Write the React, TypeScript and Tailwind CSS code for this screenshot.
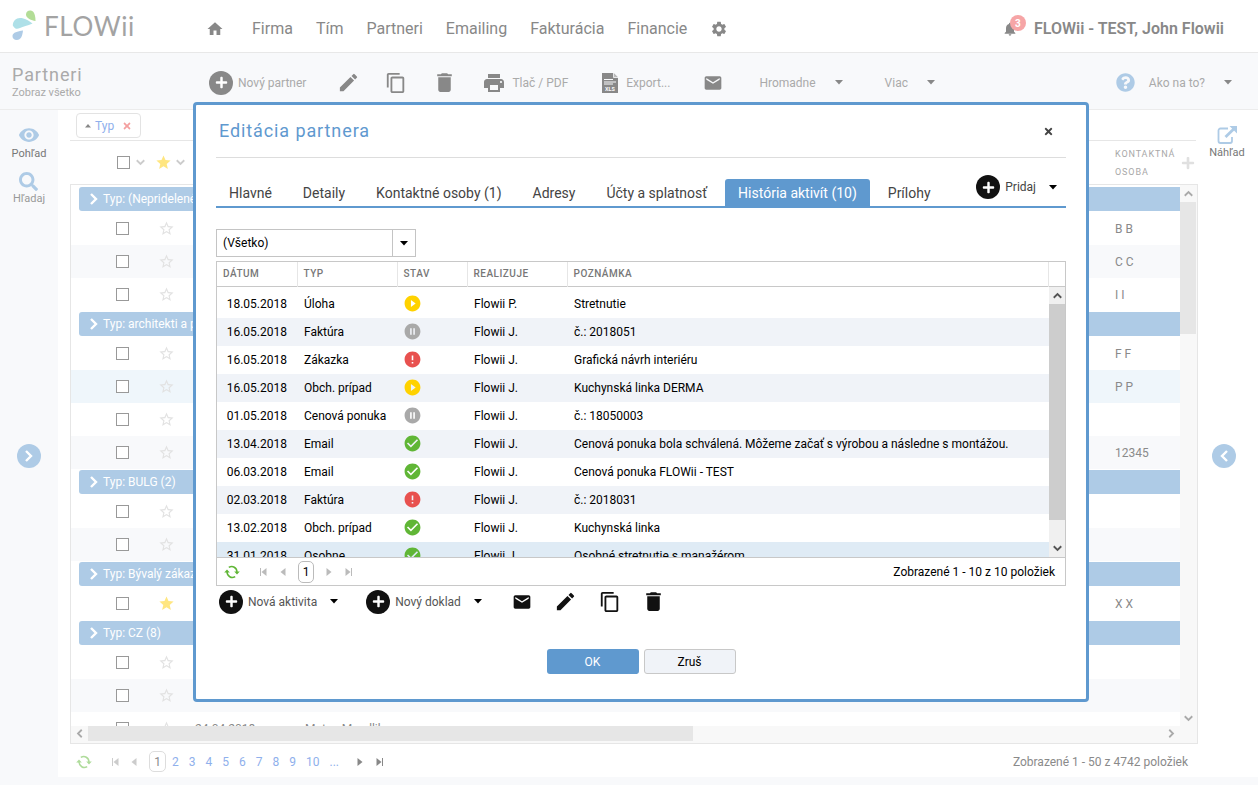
import { useState } from 'react';
import type { ReactNode } from 'react';
import {
  MdCheckCircle,
  MdContentCopy,
  MdDelete,
  MdEdit,
  MdEmail,
  MdError,
  MdHome,
  MdNotifications,
  MdPauseCircleFilled,
  MdPlayCircleFilled,
  MdPrint,
  MdSettings,
  MdStar,
  MdStarBorder,
  MdVisibility,
} from 'react-icons/md';
import { FaPlus, FaQuestionCircle, FaSearch, FaTimes } from 'react-icons/fa';

type Status = 'play' | 'pause' | 'error' | 'done';

const navigation = ['Firma', 'Tím', 'Partneri', 'Emailing', 'Fakturácia', 'Financie'];

const tabs = [
  'Hlavné',
  'Detaily',
  'Kontaktné osoby (1)',
  'Adresy',
  'Účty a splatnosť',
  'História aktivít (10)',
  'Prílohy',
];

const activities: { date: string; type: string; status: Status; who: string; note: string }[] = [
  { date: '18.05.2018', type: 'Úloha', status: 'play', who: 'Flowii P.', note: 'Stretnutie' },
  { date: '16.05.2018', type: 'Faktúra', status: 'pause', who: 'Flowii J.', note: 'č.: 2018051' },
  { date: '16.05.2018', type: 'Zákazka', status: 'error', who: 'Flowii J.', note: 'Grafická návrh interiéru' },
  { date: '16.05.2018', type: 'Obch. prípad', status: 'play', who: 'Flowii J.', note: 'Kuchynská linka DERMA' },
  { date: '01.05.2018', type: 'Cenová ponuka', status: 'pause', who: 'Flowii J.', note: 'č.: 18050003' },
  {
    date: '13.04.2018',
    type: 'Email',
    status: 'done',
    who: 'Flowii J.',
    note: 'Cenová ponuka bola schválená. Môžeme začať s výrobou a následne s montážou.',
  },
  { date: '06.03.2018', type: 'Email', status: 'done', who: 'Flowii J.', note: 'Cenová ponuka FLOWii - TEST' },
  { date: '02.03.2018', type: 'Faktúra', status: 'error', who: 'Flowii J.', note: 'č.: 2018031' },
  { date: '13.02.2018', type: 'Obch. prípad', status: 'done', who: 'Flowii J.', note: 'Kuchynská linka' },
  { date: '31.01.2018', type: 'Osobne', status: 'done', who: 'Flowii J.', note: 'Osobné stretnutie s manažérom' },
];

type Partner = { contact?: string; star?: boolean; active?: boolean; date?: string; name?: string };

const groups: { title: string; rows: Partner[] }[] = [
  { title: 'Typ: (Nepridelené)', rows: [{ contact: 'B B' }, { contact: 'C C' }, { contact: 'I I' }] },
  {
    title: 'Typ: architekti a projektanti',
    rows: [{ contact: 'F F' }, { contact: 'P P', active: true }, {}, { contact: '12345' }],
  },
  { title: 'Typ: BULG (2)', rows: [{}, {}] },
  { title: 'Typ: Bývalý zákazník', rows: [{ contact: 'X X', star: true }] },
  { title: 'Typ: CZ (8)', rows: [{}, {}, { date: '24.04.2018', name: 'Matus Mendlik' }] },
];

const Logo = () => (
  <a href="#" className="flex items-center gap-2 text-[#a3a3a3]">
    <svg width="24" height="32" viewBox="0 0 24 32" aria-hidden="true">
      <path d="M14 4.500C14 1.500 16.500 0 19 .5c3 .7 4.500 4.500 4.500 10.500-4-.8-9.500-2.500-9.500-6.500z" fill="#b3dd97" />
      <path d="M.8 15.500c0-4.500 3.200-7.500 7.200-7.500 4.500 0 9 2.700 12.500 5.500-5 2.500-9.500 2.800-12.500 4.500-2.800 1.300-5 1.500-7.200-2.500z" fill="#aee0e8" />
      <path d="M11 20.500c-.5 5-2 9.500-6.200 9.500C2 30 .3 28 .5 25.700c.3-3.200 5-4.400 10.500-5.200z" fill="#aecbe6" />
    </svg>
    <span className="font-[Lato,sans-serif] text-[26px] leading-8 tracking-wide">FLOWii</span>
  </a>
);

const CirclePlus = ({ className }: { className: string }) => (
  <span className={`flex size-6 items-center justify-center rounded-full text-white ${className}`}>
    <FaPlus size={13} />
  </span>
);

const Caret = ({ className = '' }: { className?: string }) => (
  <svg width="8" height="5" viewBox="0 0 8 5" className={className} fill="currentColor" aria-hidden="true">
    <path d="M0 0h8L4 4.500z" />
  </svg>
);

const Chevron = ({ size, className = '' }: { size: number; className?: string }) => (
  <svg
    width={size}
    height={size}
    viewBox="0 0 12 12"
    fill="none"
    stroke="currentColor"
    strokeWidth="2.400"
    className={`shrink-0 ${className}`}
    aria-hidden="true"
  >
    <path d="M3 1l5 5-5 5" />
  </svg>
);

const XlsIcon = () => (
  <svg width="16" height="20" viewBox="0 0 16 20" aria-hidden="true">
    <path d="M0 0h11.500L16 4.500V20H0z" fill="#888" />
    <path d="M11.500 0v4.500H16" fill="#bbb" stroke="#f8f9fb" strokeWidth=".8" />
    <path d="M2 6.500h9M2 9h12M2 11h9" stroke="#f8f9fb" strokeWidth="1" />
    <text x="8" y="17.500" textAnchor="middle" fontSize="5.500" fontWeight="700" fill="#f8f9fb">
      XLS
    </text>
  </svg>
);

const RefreshIcon = ({ className }: { className: string }) => (
  <svg width="16" height="14" viewBox="0 0 16 14" fill="none" className={className} aria-hidden="true">
    <path d="M13 7.500C13 2.500 8.500.2 4.800 2.400M3 6.500C3 11.500 7.500 13.800 11.200 11.600" stroke="currentColor" strokeWidth="1.500" />
    <path d="M10.200 6.500h5.600L13 9.500zM5.800 7.500H.2L3 4.500z" fill="currentColor" />
  </svg>
);

const ExternalIcon = () => (
  <svg width="21" height="18" viewBox="0 0 21 18" fill="none" aria-hidden="true">
    <path d="M11 2.500H3.500a2 2 0 0 0-2 2V15a2 2 0 0 0 2 2H13a2 2 0 0 0 2-2v-4" stroke="#aecbe6" strokeWidth="1.800" />
    <path d="M8.500 11 17 2.800" stroke="#aecbe6" strokeWidth="2.800" />
    <path d="M12.500 0H20v7.500z" fill="#aecbe6" />
  </svg>
);

const PageArrow = ({ kind, className }: { kind: 'first' | 'prev' | 'next' | 'last'; className: string }) => (
  <button className={className} aria-label={kind}>
    <svg
      width="7"
      height="8"
      viewBox="0 0 7 8"
      fill="currentColor"
      className={kind === 'next' || kind === 'last' ? 'rotate-180' : ''}
    >
      <path d="M6.500 0v8L1.500 4z" />
      {(kind === 'first' || kind === 'last') && <path d="M0 0h1v8H0z" />}
    </svg>
  </button>
);

const StatusIcon = ({ status }: { status: Status }) => {
  if (status === 'play') return <MdPlayCircleFilled size={19} className="text-[#ffd200]" />;
  if (status === 'pause') return <MdPauseCircleFilled size={19} className="text-[#a9a9a9]" />;
  if (status === 'error') return <MdError size={19} className="text-[#e8514f]" />;
  return <MdCheckCircle size={19} className="text-[#60b636]" />;
};

const ToolButton = ({ children, label, className = '' }: { children: ReactNode; label: string; className?: string }) => (
  <button className={`flex w-5 justify-center ${className}`} aria-label={label}>
    {children}
  </button>
);

const Header = () => (
  <header className="flex h-[53px] shrink-0 items-center border-b border-[#e8e8e8] bg-white pr-[34px] pl-3 text-[#888]">
    <div className="w-[194px]">
      <Logo />
    </div>
    <nav className="flex items-center gap-[23px] pt-1.5 text-base">
      <a href="#" aria-label="Domov" className="mr-[5px]">
        <MdHome size={18} />
      </a>
      {navigation.map((item) => (
        <a href="#" key={item}>
          {item}
        </a>
      ))}
      <a href="#" aria-label="Nastavenia">
        <MdSettings size={18} />
      </a>
    </nav>
    <div className="ml-auto flex items-center gap-4 pt-1.5">
      <button className="relative" aria-label="Upozornenia">
        <MdNotifications size={16} />
        <span className="absolute -top-1.5 left-2 flex size-4 items-center justify-center rounded-full bg-[#f6a5a6] text-[10px] font-bold text-white">
          3
        </span>
      </button>
      <a href="#" className="font-semibold">
        FLOWii - TEST, John Flowii
      </a>
    </div>
  </header>
);

const Toolbar = () => (
  <div className="flex h-[57px] shrink-0 items-center border-b border-[#ececec] bg-[#f8f9fb] pt-[3px] pr-[26px] pl-3 text-xs text-[#aaa]">
    <div className="w-[197px]">
      <h1 className="text-lg leading-5 tracking-wider">Partneri</h1>
      <p className="text-[11px] leading-4">Zobraz všetko</p>
    </div>
    <button className="flex items-center gap-[5px]">
      <CirclePlus className="bg-[#888]" />
      Nový partner
    </button>
    <div className="ml-8 flex items-center gap-7 text-[#888]">
      <ToolButton label="Uprav">
        <MdEdit size={23} className="shrink-0" />
      </ToolButton>
      <ToolButton label="Kopíruj">
        <MdContentCopy size={22} className="shrink-0" />
      </ToolButton>
      <ToolButton label="Zmaž">
        <MdDelete size={25} className="shrink-0" />
      </ToolButton>
      <button className="flex items-center gap-1.5 text-[#aaa]">
        <MdPrint size={24} className="text-[#888]" />
        Tlač / PDF
      </button>
      <button className="ml-1.5 flex items-center gap-2 text-[#aaa]">
        <XlsIcon />
        Export...
      </button>
      <ToolButton label="Email" className="ml-[5px]">
        <MdEmail size={20} className="shrink-0" />
      </ToolButton>
    </div>
    <button className="ml-9 flex items-center gap-[19px]">
      Hromadne
      <Caret className="text-[#888]" />
    </button>
    <button className="ml-[42px] flex items-center gap-[19px]">
      Viac
      <Caret className="text-[#888]" />
    </button>
    <button className="ml-auto flex items-center">
      <FaQuestionCircle size={19} className="mr-3.5 text-[#aecbe6]" />
      Ako na to?
      <Caret className="ml-[19px] text-[#888]" />
    </button>
  </div>
);

const PartnerColumns = () => (
  <colgroup>
    <col className="w-[78px]" />
    <col className="w-[46px]" />
    <col className="w-[110px]" />
    <col />
    <col className="w-[71px]" />
  </colgroup>
);

const checkbox = 'block size-[13px] appearance-none border border-[#999] bg-white';

const PartnersGrid = () => (
  <section className="flex min-w-0 flex-1 flex-col bg-white pl-3 text-xs text-[#8a8a8a]">
    <div className="mr-0.5 border-b border-[#e6e6e6] px-1.5 pt-[3px] pb-0.5">
      <button className="flex h-[25px] w-[65px] items-center rounded border border-[#e3e3e3] pl-2">
        <Caret className="w-1.5 rotate-180 text-[#888]" />
        <span className="ml-1 text-[#8fb0ec]">Typ</span>
        <FaTimes size={10} className="ml-2 text-[#f4a0a0]" />
      </button>
    </div>
    <div className="flex h-[43px] shrink-0 items-center text-[#ccc]">
      <input type="checkbox" aria-label="Vyber všetko" className={`${checkbox} ml-[47px]`} />
      <Chevron size={9} className="ml-1.5 rotate-90" />
      <MdStar size={17} className="ml-2.5 text-[#ffe680]" />
      <Chevron size={9} className="ml-1 rotate-90" />
      <span className="ml-auto w-[66px] text-[9px] leading-[18px] tracking-widest text-[#a8a8a8]">
        KONTAKTNÁ OSOBA
      </span>
      <FaPlus size={14} className="mr-[3px] text-[#e0e0e0]" />
    </div>
    <div className="flex min-h-0 flex-1 border border-[#e6e6e6]">
      <div className="flex min-w-0 flex-1 flex-col">
        <div className="min-h-0 flex-1 overflow-hidden pt-px">
          <table className="w-full table-fixed border-collapse">
            <PartnerColumns />
            {groups.map((group) => (
              <tbody key={group.title}>
                <tr>
                  <th colSpan={5} className="h-[26px] p-0 pl-2 text-left font-normal">
                    <button className="flex h-6 w-full items-center gap-[3px] rounded-l-[3px] bg-[#aecbe6] pl-[9px] text-white">
                      <Chevron size={12} />
                      {group.title}
                    </button>
                  </th>
                </tr>
                {group.rows.map((row, idx) => (
                  <tr key={idx} className={row.active ? 'bg-[#eff6fb]' : idx % 2 ? 'bg-[#f8f9fb]' : ''}>
                    <td className="h-[33px] p-0 pl-[45px]">
                      <input type="checkbox" aria-label="Vyber riadok" className={checkbox} />
                    </td>
                    <td className="p-0 pl-[9px]">
                      {row.star ? (
                        <MdStar size={17} className="text-[#ffe680]" />
                      ) : (
                        <MdStarBorder size={17} className="text-[#e2e2e2]" />
                      )}
                    </td>
                    <td className="p-0">{row.date}</td>
                    <td className="p-0">{row.name}</td>
                    <td className="p-0 pl-1.5">{row.contact}</td>
                  </tr>
                ))}
              </tbody>
            ))}
          </table>
        </div>
        <div className="flex h-[17px] shrink-0 items-start bg-[#f8f8f8] text-[#aaa]">
          <Chevron size={9} className="mx-1 mt-[3px] rotate-180" />
          <div className="h-[15px] w-6/11 bg-[#e6e6e6]" />
          <Chevron size={9} className="mt-[3px] mr-1 ml-auto" />
        </div>
      </div>
      <div className="flex w-[17px] shrink-0 flex-col items-center bg-[#f8f8f8] pr-px pb-4 text-[#aaa]">
        <Chevron size={9} className="my-1 -rotate-90" />
        <div className="h-[132px] w-full bg-[#e6e6e6]" />
        <Chevron size={9} className="mt-auto mb-1 rotate-90" />
      </div>
    </div>
    <div className="flex h-[33px] shrink-0 items-center pt-0.5 pr-2.5 pl-1.5">
      <button aria-label="Obnov">
        <RefreshIcon className="text-[#aedb9a]" />
      </button>
      <PageArrow kind="first" className="ml-5 text-[#ccc]" />
      <PageArrow kind="prev" className="ml-[11px] text-[#ccc]" />
      <span className="mx-3 flex h-[21px] w-[17px] items-center justify-center rounded-[5px] border border-[#ddd]">1</span>
      <div className="-ml-1.5 flex gap-2.5 text-[#8fb0ec]">
        {['2', '3', '4', '5', '6', '7', '8', '9', '10', '...'].map((page) => (
          <a href="#" key={page}>
            {page}
          </a>
        ))}
      </div>
      <PageArrow kind="next" className="ml-[18px] text-[#888]" />
      <PageArrow kind="last" className="ml-3 text-[#888]" />
      <span className="ml-auto">Zobrazené 1 - 50 z 4742 položiek</span>
    </div>
  </section>
);

const PartnerDialog = () => {
  const [active, setActive] = useState('História aktivít (10)');
  const headCell = 'border-r border-[#e6e6e6] px-1.5 text-left font-medium';

  return (
    <div className="fixed inset-0 flex items-start justify-center pt-[102px] pl-6">
      <div
        role="dialog"
        aria-labelledby="dialog-title"
        className="w-[896px] rounded border-[3px] border-[#5f99cf] bg-white px-5 pb-[25px] text-xs text-black"
      >
        <div className="flex h-[53px] items-center justify-between border-b border-[#ddd] pr-3 pl-[3px]">
          <h2 id="dialog-title" className="text-lg tracking-wider text-[#5f99cf]">
            Editácia partnera
          </h2>
          <button aria-label="Zavrieť" className="text-[#444]">
            <FaTimes size={11} />
          </button>
        </div>

        <div className="flex h-[50px] items-end border-b-2 border-[#5f99cf]">
          <div role="tablist" className="flex gap-[5px]">
            {tabs.map((tab) => (
              <button
                key={tab}
                role="tab"
                aria-selected={tab === active}
                onClick={() => setActive(tab)}
                className={`h-[27px] rounded-t-[3px] px-[13px] text-sm ${
                  tab === active ? 'bg-[#5f99cf] text-white' : 'text-[#444]'
                }`}
              >
                {tab}
              </button>
            ))}
          </div>
          <button className="mr-[9px] mb-[7px] ml-auto flex items-center gap-[5px] text-[#444]">
            <CirclePlus className="bg-[#111]" />
            Pridaj
            <Caret className="ml-2 text-black" />
          </button>
        </div>

        <div className="relative mt-[21px] w-[200px]">
          <select
            aria-label="Filter aktivít"
            className="block h-7 w-full appearance-none rounded-none border border-[#c4c4c4] bg-white px-1.5"
          >
            <option>(Všetko)</option>
          </select>
          <span className="pointer-events-none absolute inset-y-0 right-0 flex w-6 items-center justify-center border border-[#c4c4c4]">
            <Caret />
          </span>
        </div>

        <div className="mt-1 border border-[#c8c8c8]">
          <div className="flex h-[295px]">
            <div className="min-w-0 flex-1 overflow-hidden">
              <table className="w-full table-fixed border-collapse">
                <colgroup>
                  <col className="w-[80px]" />
                  <col className="w-[100px]" />
                  <col className="w-[70px]" />
                  <col className="w-[100px]" />
                  <col />
                </colgroup>
                <thead className="border-b border-[#c8c8c8] text-[10px] tracking-wider text-[#777]">
                  <tr className="h-6">
                    <th className={headCell}>DÁTUM</th>
                    <th className={headCell}>TYP</th>
                    <th className={headCell}>STAV</th>
                    <th className={headCell}>REALIZUJE</th>
                    <th className={headCell}>POZNÁMKA</th>
                  </tr>
                </thead>
                <tbody className="before:block before:h-[3px]">
                  {activities.map((row, idx) => (
                    <tr
                      key={idx}
                      className={`h-7 ${
                        idx === activities.length - 1 ? 'bg-[#dfebf5]' : idx % 2 ? 'bg-[#f0f3f8]' : ''
                      }`}
                    >
                      <td className="p-0 pr-2.5 text-right">{row.date}</td>
                      <td className="p-0 pl-[7px] whitespace-nowrap">{row.type}</td>
                      <td className="p-0 pl-1.5">
                        <StatusIcon status={row.status} />
                      </td>
                      <td className="p-0 pl-[7px]">{row.who}</td>
                      <td className="p-0 pl-[7px]">{row.note}</td>
                    </tr>
                  ))}
                </tbody>
              </table>
            </div>
            <div className="flex w-4 shrink-0 flex-col pt-6">
              <div className="flex min-h-0 flex-1 flex-col items-center border-t border-[#c8c8c8] bg-[#f0f0f0] text-[#555]">
                <Chevron size={9} className="my-1 -rotate-90" />
                <div className="h-[216px] w-full bg-[#cdcdcd]" />
                <Chevron size={9} className="mt-auto mb-1 rotate-90" />
              </div>
            </div>
          </div>
          <div className="flex h-7 items-center border-t border-[#c8c8c8] pr-2.5 pl-[7px]">
            <button aria-label="Obnov">
              <RefreshIcon className="text-[#60b636]" />
            </button>
            <PageArrow kind="first" className="ml-5 text-[#bbb]" />
            <PageArrow kind="prev" className="ml-3 text-[#bbb]" />
            <span className="mx-3 flex h-[22px] w-4 items-center justify-center rounded-[5px] border border-[#bbb]">1</span>
            <PageArrow kind="next" className="text-[#bbb]" />
            <PageArrow kind="last" className="ml-3 text-[#bbb]" />
            <span className="ml-auto">Zobrazené 1 - 10 z 10 položiek</span>
          </div>
        </div>

        <div className="mt-[3px] flex items-center pl-[3px] text-[#555]">
          <button className="flex items-center gap-[5px]">
            <CirclePlus className="bg-[#111]" />
            Nová aktivita
            <Caret className="ml-2 text-black" />
          </button>
          <button className="ml-7 flex items-center gap-[5px]">
            <CirclePlus className="bg-[#111]" />
            Nový doklad
            <Caret className="ml-2 text-black" />
          </button>
          <div className="ml-[30px] flex items-center gap-6 text-[#111]">
            <ToolButton label="Email">
              <MdEmail size={20} className="shrink-0" />
            </ToolButton>
            <ToolButton label="Uprav">
              <MdEdit size={23} className="shrink-0" />
            </ToolButton>
            <ToolButton label="Kopíruj">
              <MdContentCopy size={22} className="shrink-0" />
            </ToolButton>
            <ToolButton label="Zmaž">
              <MdDelete size={25} className="shrink-0" />
            </ToolButton>
          </div>
        </div>

        <div className="mt-[35px] flex justify-center gap-[5px]">
          <button className="h-[25px] w-[92px] rounded-[3px] bg-[#5f99cf] text-white">OK</button>
          <button className="h-[25px] w-[92px] rounded-[3px] border border-[#c8c8c8] bg-[#f0f3f8]">Zruš</button>
        </div>
      </div>
    </div>
  );
};

const App = () => {
  return (
    <div className="flex h-screen flex-col bg-[#f8f9fb] font-[Roboto,sans-serif]">
      <Header />
      <Toolbar />
      <main className="flex min-h-0 flex-1 pb-2">
        <aside className="flex w-[58px] shrink-0 flex-col items-center pt-3.5 text-[11px] leading-4">
          <button className="flex flex-col items-center text-[#777]">
            <MdVisibility size={22} className="text-[#aecbe6]" />
            Pohľad
          </button>
          <button className="mt-2.5 flex flex-col items-center text-[#999]">
            <FaSearch size={19} className="text-[#aecbe6]" />
            Hľadaj
          </button>
          <button
            aria-label="Rozbaľ"
            className="mt-[237px] flex size-6 items-center justify-center rounded-full bg-[#aecbe6] text-white"
          >
            <Chevron size={12} />
          </button>
        </aside>
        <PartnersGrid />
        <aside className="flex w-[60px] shrink-0 flex-col items-center bg-white pt-4 pr-0.5 text-[11px] leading-4">
          <button className="flex flex-col items-center gap-px text-[#777]">
            <ExternalIcon />
            Náhľad
          </button>
          <button
            aria-label="Zbaľ"
            className="mt-[283px] mr-1.5 flex size-6 items-center justify-center rounded-full bg-[#aecbe6] text-white"
          >
            <Chevron size={12} className="rotate-180" />
          </button>
        </aside>
      </main>
      <PartnerDialog />
    </div>
  );
};

export default App;
